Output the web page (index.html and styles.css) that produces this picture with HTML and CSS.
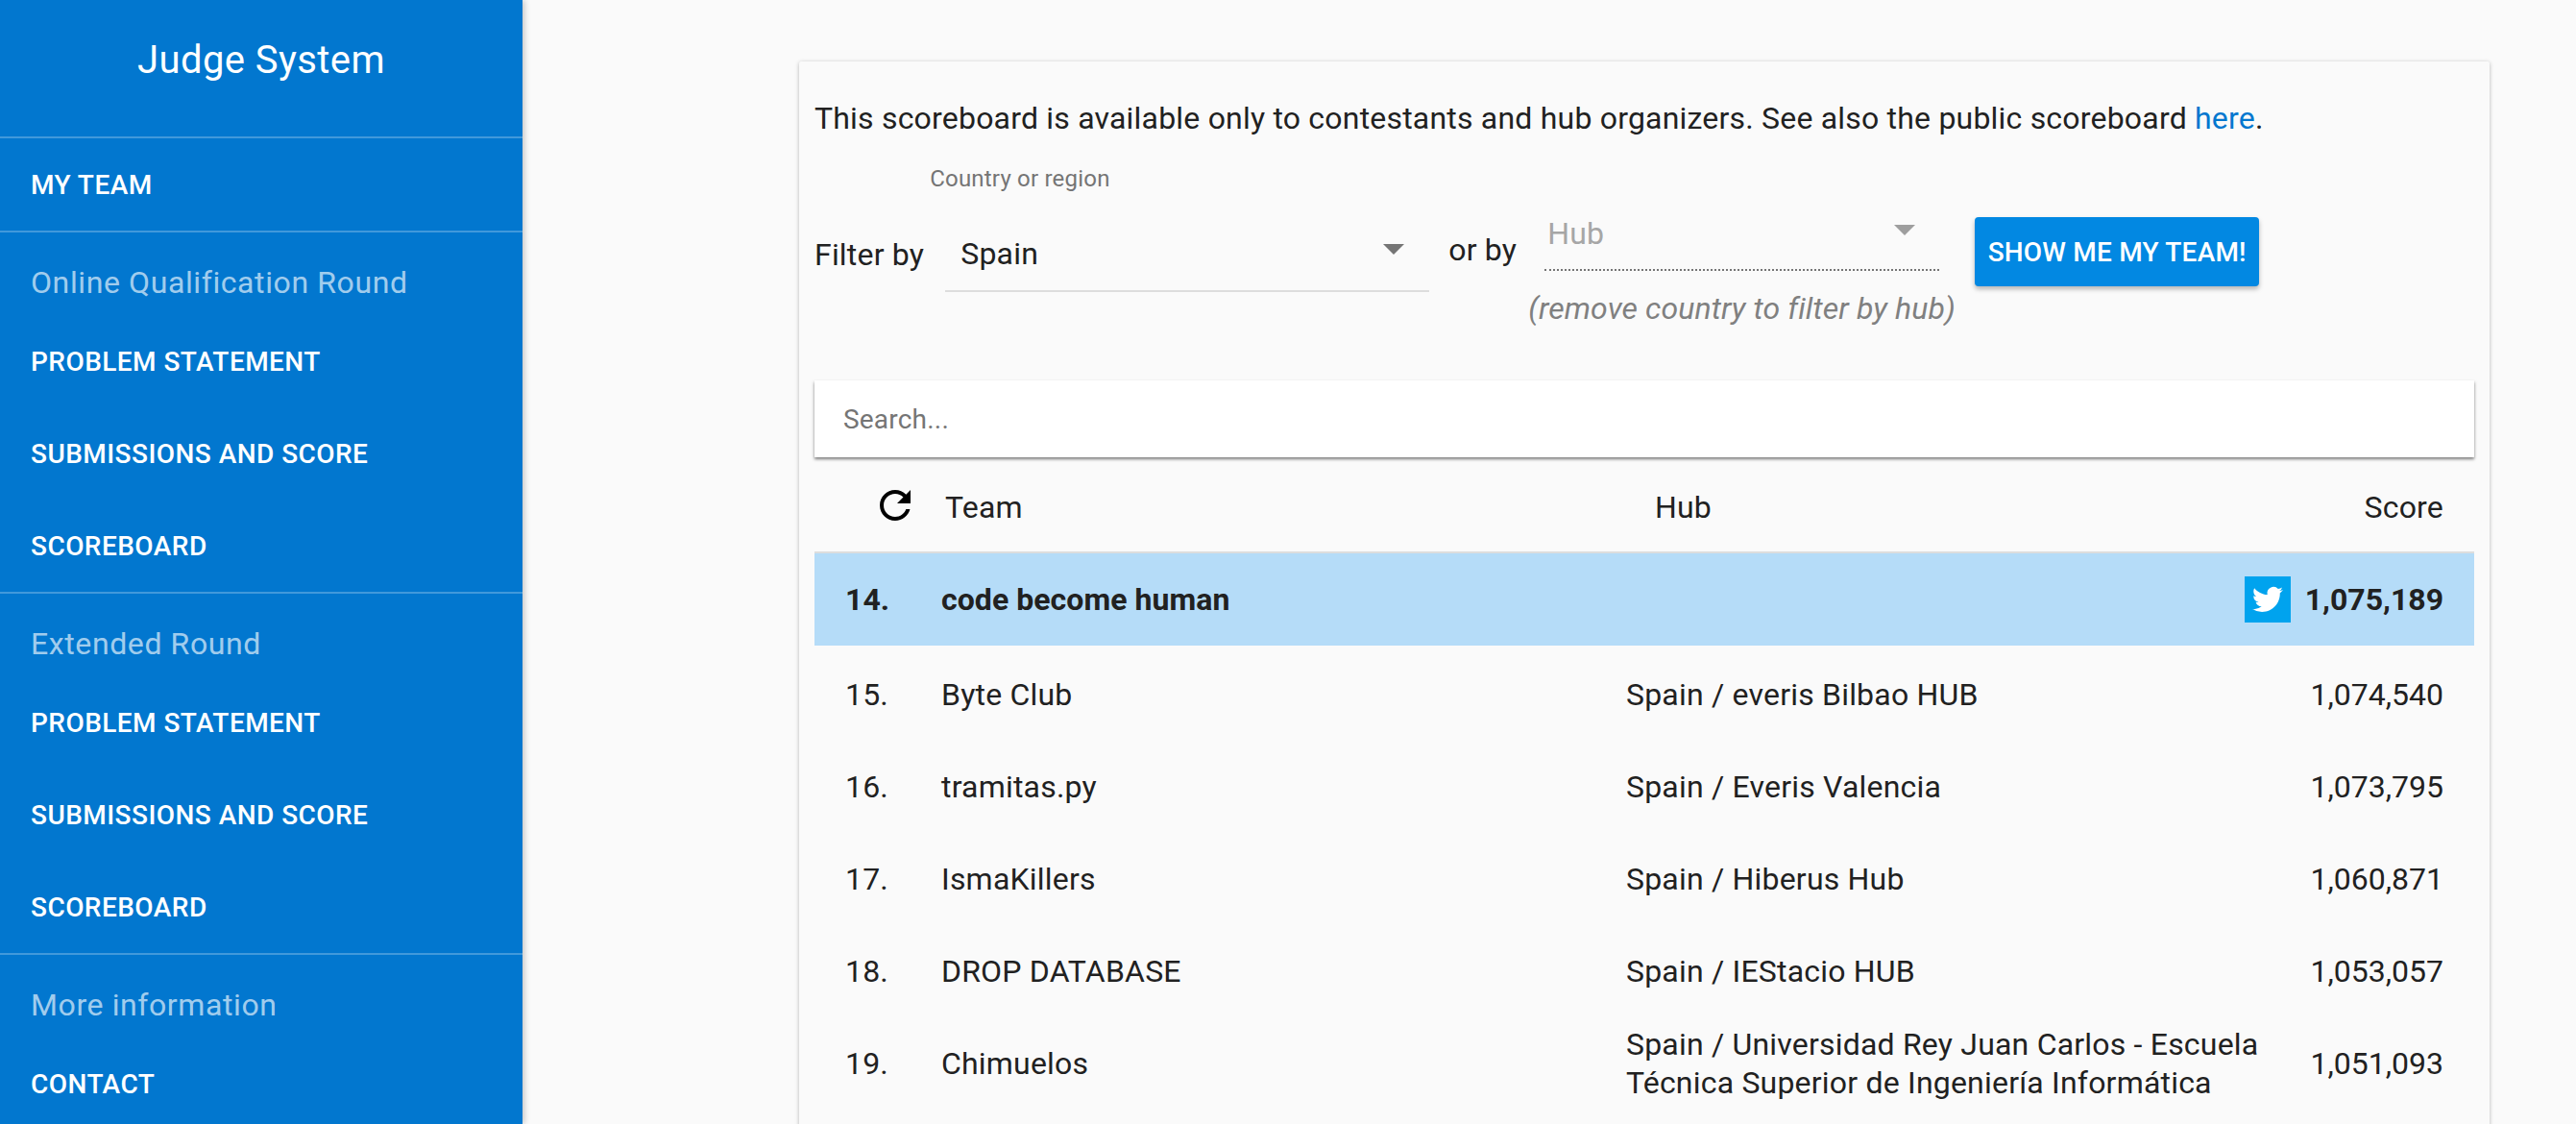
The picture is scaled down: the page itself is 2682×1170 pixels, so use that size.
FILE: index.html
```html
<!DOCTYPE html>
<html lang="en">
<head>
<meta charset="utf-8">
<title>Judge System</title>
<link rel="stylesheet" href="styles.css">
</head>
<body>
<div class="app">
  <nav class="sidebar">
    <div class="brand">Judge System</div>
    <div class="nav-block"><a class="nav-item">MY TEAM</a></div>
    <div class="nav-block">
      <div class="nav-title">Online Qualification Round</div>
      <a class="nav-item">PROBLEM STATEMENT</a>
      <a class="nav-item">SUBMISSIONS AND SCORE</a>
      <a class="nav-item">SCOREBOARD</a>
    </div>
    <div class="nav-block">
      <div class="nav-title">Extended Round</div>
      <a class="nav-item">PROBLEM STATEMENT</a>
      <a class="nav-item">SUBMISSIONS AND SCORE</a>
      <a class="nav-item">SCOREBOARD</a>
    </div>
    <div class="nav-block">
      <div class="nav-title">More information</div>
      <a class="nav-item">CONTACT</a>
    </div>
  </nav>
  <main class="main">
    <section class="card">
      <p class="intro">This scoreboard is available only to contestants and hub organizers. See also the public scoreboard <a class="link">here</a>.</p>
      <div class="filters">
        <span class="filter-label">Filter by</span>
        <div class="country">
          <div class="country-label">Country or region</div>
          <div class="select-country"><span>Spain</span><i class="caret"></i></div>
        </div>
        <span class="or-by">or by</span>
        <div class="hub-col">
          <div class="select-hub"><span>Hub</span><i class="caret caret-light"></i></div>
          <div class="hub-note">(remove country to filter by hub)</div>
        </div>
        <button class="team-btn">SHOW ME MY TEAM!</button>
      </div>
      <div class="search">Search...</div>
      <div class="thead">
        <svg class="refresh" viewBox="0 0 24 24"><path d="M17.65 6.35C16.2 4.9 14.21 4 12 4c-4.42 0-7.99 3.58-7.99 8s3.57 8 7.99 8c3.73 0 6.84-2.55 7.73-6h-2.08c-.82 2.33-3.04 4-5.65 4-3.31 0-6-2.69-6-6s2.69-6 6-6c1.66 0 3.14.69 4.22 1.78L13 11h7V4l-2.35 2.35z"/></svg>
        <span class="th-team">Team</span>
        <span class="th-hub">Hub</span>
        <span class="th-score">Score</span>
      </div>
      <div class="row row-me">
        <span>14.</span><span>code become human</span>
        <span class="score score-me"><span class="tw"><svg viewBox="0 0 24 24"><path d="M23.95 4.57a10 10 0 0 1-2.82.77 4.96 4.96 0 0 0 2.16-2.72c-.95.55-2 .96-3.13 1.19a4.92 4.92 0 0 0-8.38 4.48C7.69 8.09 4.07 6.13 1.64 3.16a4.82 4.82 0 0 0-.67 2.48c0 1.71.87 3.21 2.19 4.1a4.9 4.9 0 0 1-2.23-.61v.06a4.92 4.92 0 0 0 3.95 4.83 5 5 0 0 1-2.21.08 4.94 4.94 0 0 0 4.6 3.42A9.87 9.87 0 0 1 0 19.54a14 14 0 0 0 7.56 2.21c9.05 0 14-7.5 14-13.98 0-.21 0-.42-.02-.63a9.94 9.94 0 0 0 2.46-2.55l-.05-.02z"/></svg></span>1,075,189</span>
      </div>
      <div class="row"><span>15.</span><span>Byte Club</span><span>Spain / everis Bilbao HUB</span><span class="score">1,074,540</span></div>
      <div class="row"><span>16.</span><span>tramitas.py</span><span>Spain / Everis Valencia</span><span class="score">1,073,795</span></div>
      <div class="row"><span>17.</span><span>IsmaKillers</span><span>Spain / Hiberus Hub</span><span class="score">1,060,871</span></div>
      <div class="row"><span>18.</span><span>DROP DATABASE</span><span>Spain / IEStacio HUB</span><span class="score">1,053,057</span></div>
      <div class="row"><span>19.</span><span>Chimuelos</span><span class="hub-long">Spain / Universidad Rey Juan Carlos - Escuela Técnica Superior de Ingeniería Informática</span><span class="score">1,051,093</span></div>
    </section>
  </main>
</div>
</body>
</html>
```

FILE: styles.css
```css
* { box-sizing: border-box; }
html, body { margin: 0; height: 100%; overflow: hidden; }
body {
  background: #fafafa;
  color: #212121;
  font-family: Roboto, "Noto Sans", sans-serif;
  font-size: 32px;
  letter-spacing: .2px;
}
.app { display: flex; height: 1170px; overflow: hidden; }

.sidebar {
  flex: 0 0 544px;
  background: #0277cf;
  color: #fff;
  box-shadow: 2px 0 6px rgba(0, 0, 0, .22);
  overflow: hidden;
  z-index: 1;
}
.brand {
  height: 142px;
  padding-top: 39px;
  text-align: center;
  font-size: 40px;
  line-height: 48px;
  letter-spacing: .4px;
}
.nav-block { border-top: 2px solid rgba(255, 255, 255, .25); }
.nav-item {
  display: flex;
  align-items: center;
  height: 96px;
  padding-left: 32px;
  font-size: 28px;
  font-weight: 500;
  letter-spacing: .45px;
}
.nav-title {
  height: 86px;
  padding: 34px 0 0 32px;
  font-size: 32px;
  line-height: 36px;
  letter-spacing: .6px;
  color: rgba(255, 255, 255, .65);
}

.main { flex: 1; padding: 64px 90px 0 288px; min-width: 0; }
.card {
  height: 1300px;
  padding: 0 16px;
  background: #fafafa;
  box-shadow: 0 1px 4px rgba(0, 0, 0, .28);
  border-radius: 2px;
}
.intro { margin: 0; padding-top: 40px; line-height: 38px; }
.link { color: #0277cf; }

.filters { display: flex; height: 254px; align-items: flex-start; }
.filter-label { margin: 103px 22px 0 0; line-height: 40px; }
.country { width: 504px; }
.country-label {
  margin: 30px 0 0 -16px;
  font-size: 24px;
  line-height: 28px;
  color: #757575;
}
.select-country {
  position: relative;
  height: 68px;
  margin-top: 36px;
  padding: 8px 0 0 16px;
  line-height: 40px;
  border-bottom: 2px solid #ddd;
}
.caret {
  position: absolute;
  top: 18px;
  right: 26px;
  width: 0;
  height: 0;
  border-left: 11px solid transparent;
  border-right: 11px solid transparent;
  border-top: 11px solid #757575;
}
.caret-light { top: 28px; right: 25px; border-top-color: #9e9e9e; }
.or-by { margin: 98px 0 0 20px; line-height: 40px; }
.hub-col { width: 411px; margin: 64px 0 0 29px; }
.select-hub {
  position: relative;
  height: 76px;
  padding: 18px 0 0 3px;
  line-height: 38px;
  color: #a6a6a6;
  border-bottom: 2px dotted #757575;
}
.hub-note {
  margin: 20px 0 0 -17px;
  line-height: 38px;
  font-style: italic;
  letter-spacing: .1px;
  color: #808080;
  white-space: nowrap;
}
.team-btn {
  width: 296px;
  height: 72px;
  margin: 84px 0 0 37px;
  padding: 0;
  border: 0;
  border-radius: 4px;
  background: #0288e2;
  color: #fff;
  font: 500 28px Roboto, sans-serif;
  letter-spacing: .2px;
  white-space: nowrap;
  box-shadow: 0 3px 5px rgba(0, 0, 0, .28);
}

.search {
  height: 80px;
  padding-left: 30px;
  line-height: 82px;
  font-size: 28px;
  color: #757575;
  background: #fff;
  box-shadow: 0 2px 3px rgba(0, 0, 0, .5);
}
.thead {
  display: grid;
  grid-template-columns: 76px 739px 1fr 1fr;
  align-items: center;
  height: 100px;
  padding: 6px 0 0 60px;
  border-bottom: 2px solid #ddd;
}
.refresh { width: 48px; height: 48px; margin-bottom: 4px; fill: #000; display: block; }
.th-score { text-align: right; padding-right: 32px; }

.row {
  display: grid;
  grid-template-columns: 100px 713px 680px 1fr;
  align-items: center;
  height: 96px;
  padding: 6px 0 0 32px;
}
.row-me { padding-top: 0; background: #b5dcf8; font-weight: 700; letter-spacing: .05px; }
.score {
  display: flex;
  justify-content: flex-end;
  align-items: center;
  padding-right: 32px;
  letter-spacing: 0;
}
.score-me { grid-column: 3 / 5; }
.tw {
  display: flex;
  align-items: center;
  justify-content: center;
  width: 48px;
  height: 48px;
  margin-right: 15px;
  background: #00a3ee;
}
.tw svg { width: 32px; height: 32px; fill: #fff; }
.hub-long { line-height: 40px; }
```
